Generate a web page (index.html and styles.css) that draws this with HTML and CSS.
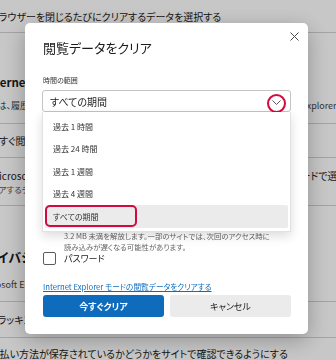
FILE: index.html
```html
<!DOCTYPE html>
<html lang="ja">
<head>
    <meta charset="UTF-8">
    <meta name="viewport" content="width=device-width, initial-scale=1.0">
    <title>閲覧データをクリア</title>
    <link rel="stylesheet" href="styles.css">
</head>
<body>
    <!-- Settings page behind the dialog -->
    <main class="page">
        <div class="row row-top">
            <span class="cut cut-10">ブラウザーを閉じるたびにクリアするデータを選択する</span>
        </div>

        <section class="block ie-block">
            <h2 class="block-title"><span class="cut cut-16">Internet Explorer の閲覧データをクリア</span></h2>
            <div class="split block-desc">
                <span class="lead lead-ie">これには、履歴、パスワード、Cookie などが含まれます。選択したデータは</span>
                <span class="tail">Internet Explorer と Internet Explorer モードから削除されます</span>
            </div>
        </section>

        <div class="row row-now">
            <span class="cut cut-11">今すぐ閲覧データをクリア</span>
        </div>

        <div class="row-stack">
            <div class="split row-title">
                <span class="lead lead-edge">Microsoft Edge を閉じるたびに Internet Explorer </span>
                <span class="tail">モードで選択したデータをクリアする</span>
            </div>
            <div class="row-sub"><span class="cut cut-16">クリアするデータを選択します</span></div>
        </div>

        <section class="block privacy-block">
            <h2 class="block-title big"><span class="cut cut-27">プライバシー</span></h2>
            <div class="block-desc privacy-desc"><span class="cut cut-22">Microsoft Edge の閲覧データを管理します</span></div>
        </section>

        <div class="row row-track">
            <span class="cut cut-10">トラッキング防止</span>
        </div>

        <div class="row row-pay">
            <span class="cut cut-20">お支払い方法が保存されているかどうかをサイトで確認できるようにする</span>
        </div>
    </main>

    <div class="backdrop"></div>

    <!-- Dialog -->
    <div class="dialog" role="dialog" aria-label="閲覧データをクリア">
        <button class="dlg-close" type="button" aria-label="閉じる">
            <svg width="9" height="9" viewBox="0 0 9 9"><path d="M0.5 0.5 L8.5 8.5 M8.5 0.5 L0.5 8.5" stroke="#4a4a4a" stroke-width="1" fill="none"/></svg>
        </button>

        <h1 class="dlg-title">閲覧データをクリア</h1>

        <div class="field-label">時間の範囲</div>
        <div class="select-wrap">
            <div class="select">すべての期間</div>
            <svg class="select-chevron" width="9" height="5" viewBox="0 0 9 5"><path d="M0.5 0.5 L4.5 4.5 L8.5 0.5" stroke="#555" stroke-width="1" fill="none"/></svg>
            <span class="mark-circle"></span>

            <ul class="dropdown">
                <li>過去 1 時間</li>
                <li>過去 24 時間</li>
                <li>過去 1 週間</li>
                <li>過去 4 週間</li>
                <li class="selected">すべての期間<span class="mark-rect"></span></li>
            </ul>
        </div>

        <div class="options">
            <label class="opt"><span class="box"></span><span class="opt-text">閲覧の履歴</span></label>
            <label class="opt"><span class="box"></span><span class="opt-text">ダウンロードの履歴</span></label>
            <label class="opt"><span class="box"></span><span class="opt-text">Cookie およびその他のサイト データ</span></label>
            <label class="opt opt-tight">
                <span class="box"></span>
                <span class="opt-text">キャッシュされた画像とファイル
                    <span class="opt-desc">3.2 MB 未満を解放します。一部のサイトでは、次回のアクセス時に<br>読み込みが遅くなる可能性があります。</span>
                </span>
            </label>
            <label class="opt opt-tight"><span class="box"></span><span class="opt-text">パスワード</span></label>
        </div>

        <a class="ie-link" href="#">Internet Explorer モードの閲覧データをクリアする</a>

        <div class="actions">
            <button class="btn btn-primary" type="button">今すぐクリア</button>
            <button class="btn btn-secondary" type="button">キャンセル</button>
        </div>
    </div>
</body>
</html>
```

FILE: styles.css
```css
/* Base */
* {
    margin: 0;
    padding: 0;
    box-sizing: border-box;
}

body {
    font-family: "Noto Sans CJK JP", "Noto Sans", sans-serif;
    font-feature-settings: "palt";
    color: #1a1a1a;
    width: 336px;
    height: 360px;
    overflow: hidden;
    background: #fff;
}

/* Settings page */
.page {
    height: 360px;
    overflow: hidden;
    background: #fff;
    white-space: nowrap;
}

.cut {
    display: inline-block;
}

.cut-10 { margin-left: -10px; }
.cut-11 { margin-left: -11px; }
.cut-16 { margin-left: -16px; }
.cut-20 { margin-left: -20px; }
.cut-22 { margin-left: -22px; }
.cut-27 { margin-left: -27px; }

.row {
    display: flex;
    align-items: center;
    font-size: 10px;
    border-bottom: 1px solid #d2d2d2;
}

.row-top { height: 33px; }
.row-now { height: 34px; }
.row-track { height: 36px; }
.row-pay { height: 30px; border-bottom: none; }

.block {
    border-bottom: 1px solid #d2d2d2;
}

.ie-block { padding: 41px 0 11px; }
.privacy-block { padding: 42px 0 10px; }

.block-title {
    font-size: 11.5px;
    line-height: 16px;
    font-weight: 700;
}

.block-title.big {
    font-size: 13px;
    line-height: 18px;
}

.block-desc {
    margin-top: 10px;
    font-size: 9px;
    line-height: 12px;
    color: #444;
}

.privacy-desc { margin-top: 13px; }

.split {
    display: flex;
}

.lead {
    flex: none;
    overflow: hidden;
}

.lead-ie { margin-left: -28px; width: 294px; }
.lead-edge { margin-left: -9px; width: 300px; }

.row-stack {
    padding: 11px 0 10px;
    border-bottom: 1px solid #d2d2d2;
}

.row-title {
    font-size: 10px;
    line-height: 14px;
}

.row-sub {
    font-size: 8.5px;
    line-height: 12px;
    color: #555;
}

.backdrop {
    position: fixed;
    inset: 0;
    background: rgba(0, 0, 0, 0.22);
}

/* Dialog */
.dialog {
    position: fixed;
    top: 23px;
    left: 25px;
    width: 283px;
    padding: 15px 17px 17px 18px;
    background: #fff;
    border-radius: 5px;
    box-shadow: 0 6px 22px rgba(0, 0, 0, 0.28);
}

.dlg-close {
    position: absolute;
    top: 3px;
    right: 4px;
    width: 20px;
    height: 20px;
    border: none;
    background: none;
    display: flex;
    align-items: center;
    justify-content: center;
}

.dlg-title {
    font-size: 13px;
    line-height: 20px;
    font-weight: 400;
    color: #1b1b1b;
}

.field-label {
    margin-top: 15px;
    font-size: 7px;
    line-height: 14px;
    color: #333;
}

.select-wrap {
    position: relative;
    margin-top: 3px;
    margin-left: -1px;
    width: 249px;
}

.select {
    height: 22px;
    border: 1px solid #c4c4c4;
    border-radius: 3px;
    display: flex;
    align-items: center;
    padding-left: 7px;
    font-size: 10px;
    color: #222;
}

.select-chevron {
    position: absolute;
    left: 230px;
    top: 10px;
}

.mark-circle {
    position: absolute;
    left: 225px;
    top: 4px;
    width: 19px;
    height: 19px;
    border: 2px solid #d4093d;
    border-radius: 50%;
}

.dropdown {
    position: absolute;
    top: 22px;
    left: 0;
    right: 0;
    z-index: 2;
    list-style: none;
    padding: 3px 2px 3px;
    background: #fff;
    border: 1px solid #e2e2e2;
    border-top: none;
    box-shadow: 0 4px 10px rgba(0, 0, 0, 0.14);
}

.dropdown li {
    position: relative;
    height: 22.5px;
    display: flex;
    align-items: center;
    padding-left: 8px;
    font-size: 8px;
    color: #333;
}

.dropdown li.selected {
    background: #ebebeb;
    border-radius: 2px;
}

.mark-rect {
    position: absolute;
    left: 0;
    top: 0;
    width: 92px;
    height: 22px;
    border: 2px solid #d4093d;
    border-radius: 5px;
}

/* Checkbox list (scrolled to the bottom) */
.options {
    margin-top: 4px;
    height: 149px;
    display: flex;
    flex-direction: column;
    justify-content: flex-end;
    overflow: hidden;
}

.opt {
    display: flex;
    align-items: flex-start;
    gap: 8px;
    margin-bottom: 8px;
}

.opt-tight {
    margin-bottom: 0;
}

.box {
    flex: none;
    width: 13px;
    height: 13px;
    border: 1px solid #5c5c5c;
    border-radius: 2px;
    background: #fff;
}

.opt-text {
    font-size: 9px;
    line-height: 13px;
    color: #222;
}

.opt-desc {
    display: block;
    font-size: 7.4px;
    line-height: 11px;
    color: #666;
}

.ie-link {
    display: inline-block;
    margin-top: 16px;
    font-size: 7.7px;
    line-height: 12px;
    color: #0f6cbd;
    text-decoration: underline;
}

.actions {
    display: flex;
    gap: 6px;
}

.btn {
    flex: 1;
    height: 22px;
    border: none;
    border-radius: 3px;
    font-family: inherit;
    font-feature-settings: "palt";
    font-size: 9px;
}

.btn-primary {
    background: #0f6cbd;
    color: #fff;
    font-weight: 700;
}

.btn-secondary {
    background: #ebebeb;
    color: #1a1a1a;
}
```
